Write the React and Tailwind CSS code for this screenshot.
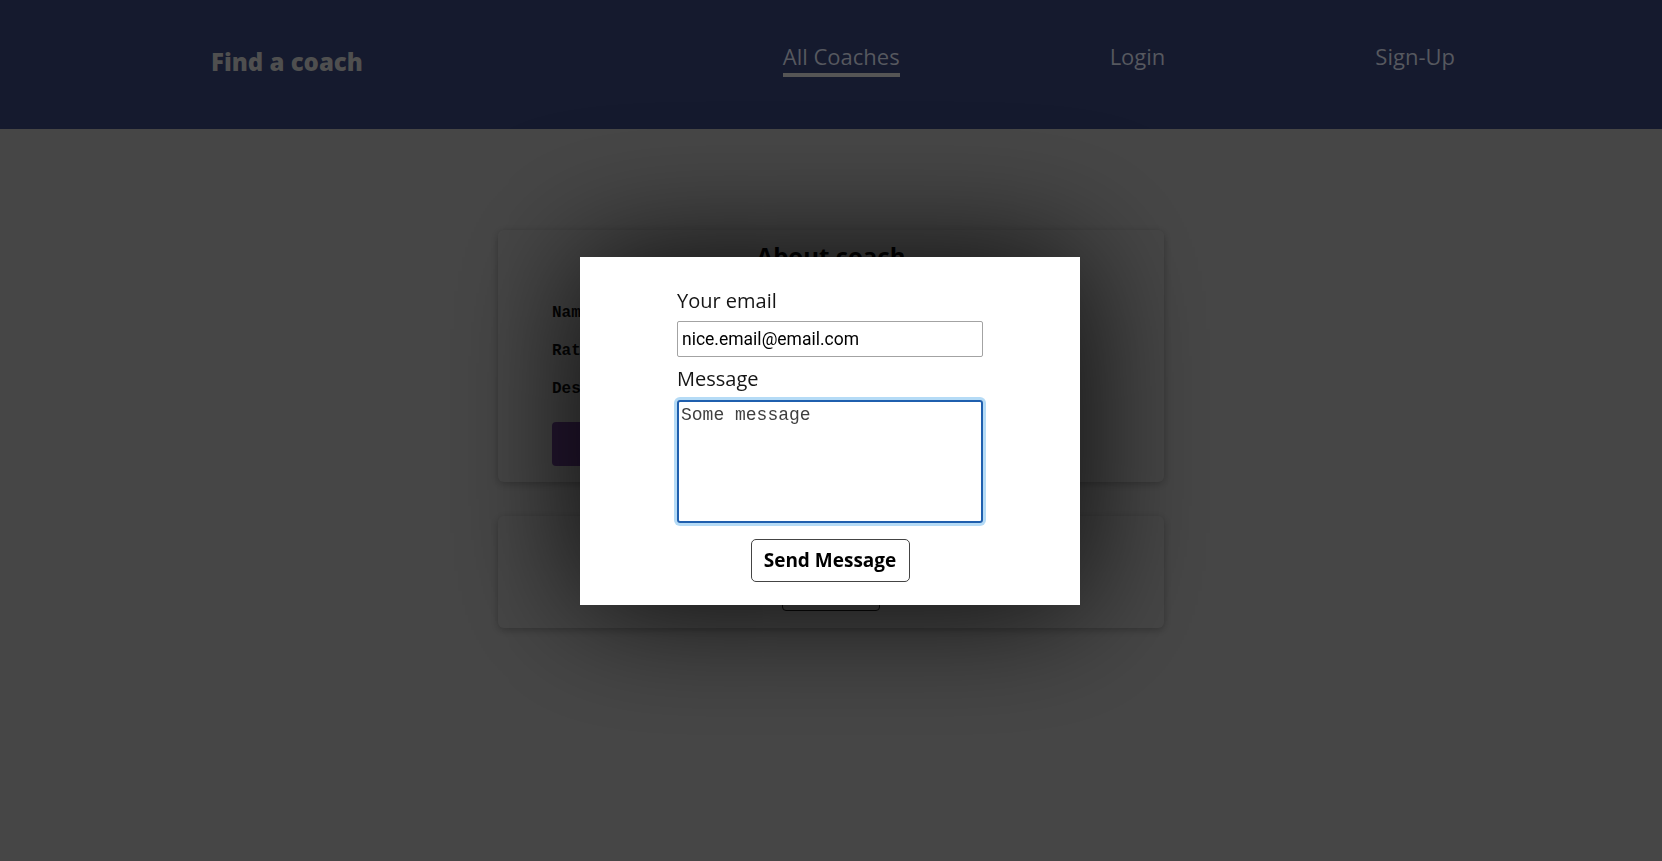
export default function App() {
  return (
    <div className="relative min-h-screen bg-white font-['Open_Sans',sans-serif]">
      {/* Top bar */}
      <header className="h-[129px] bg-[#151a2e] flex items-start justify-between pl-[211px] pr-[207px]">
        <h1 className="mt-[47px] text-[24px] leading-[30px] font-extrabold text-[#4f4f4f]">
          Find a coach
        </h1>
        <nav>
          <ul className="flex gap-[210px] mt-[43px]">
            <li>
              <a className="block text-[22px] leading-[27px] text-[#56585f]">All Coaches</a>
              <div className="mt-[3px] h-[4px] bg-[#555555]" />
            </li>
            <li>
              <a className="block text-[22px] leading-[27px] text-[#56585f]">Login</a>
            </li>
            <li>
              <a className="block text-[22px] leading-[27px] text-[#56585f]">Sign-Up</a>
            </li>
          </ul>
        </nav>
      </header>

      {/* Coach details behind the dialog */}
      <main className="pt-[101px] flex flex-col items-center gap-[34px]">
        <section className="w-[666px] h-[252px] rounded-[6px] bg-white shadow-[0_2px_8px_rgba(0,0,0,0.26)] pt-[11px] pl-[54px]">
          <h2 className="text-center pr-[54px] text-[24px] leading-[30px] font-bold text-black">About coach</h2>
          <ul className="mt-[23px] font-['Liberation_Mono',monospace] font-bold text-[16px] leading-[38px] text-[#111]">
            <li>Name: Maximilian Schwarzmüller</li>
            <li>Rate: $30/hour</li>
            <li>Description: Experienced web developer</li>
          </ul>
          <button className="mt-[14px] h-[44px] rounded-[4px] bg-[#8a55b8] text-white pl-[40px] pr-[24px] text-[18px]">
            Contact
          </button>
        </section>

        <section className="w-[666px] h-[112px] rounded-[6px] bg-white shadow-[0_2px_8px_rgba(0,0,0,0.26)] flex flex-col items-center justify-end pb-[17px]">
          <h2 className="text-[22px] font-bold mb-[6px]">Interested? Reach out now!</h2>
          <button className="w-[98px] h-[40px] rounded-[4px] border border-[#222] bg-white text-[16px]">Contact</button>
        </section>
      </main>

      {/* Backdrop */}
      <div className="fixed left-0 right-0 top-[129px] bottom-0 bg-black/[0.725]" />

      {/* Dialog */}
      <div className="fixed left-[580px] top-[257px] w-[500px] h-[348px] bg-white shadow-[0_0_130px_rgba(0,0,0,0.88)]">
        <form className="w-[306px] mx-auto pt-[32px]">
          <label className="block text-[20px] leading-[24px] text-[#151515]">Your email</label>
          <input
            type="email"
            defaultValue="nice.email@email.com"
            className="mt-[8px] block w-[306px] h-[36px] border border-[#a3a3a3] rounded-[2px] px-[4px] font-['Roboto',sans-serif] text-[17.5px] text-black outline-none"
          />
          <label className="mt-[10px] block text-[20px] leading-[24px] text-[#151515]">Message</label>
          <textarea
            defaultValue="Some message"
            className="mt-[9px] block w-[306px] h-[123px] border-2 border-[#1f5fae] rounded-[3px] ring-[3px] ring-[#b5dbf6] px-[2px] pt-0 font-['Liberation_Mono',monospace] text-[18px] text-[#3f3f3f] resize-none outline-none"
          />
          <button
            type="button"
            className="mt-[16px] mx-auto block w-[159px] h-[43px] border border-[#444] rounded-[5px] bg-white text-[19px] font-bold text-black"
          >
            Send Message
          </button>
        </form>
      </div>
    </div>
  );
}
